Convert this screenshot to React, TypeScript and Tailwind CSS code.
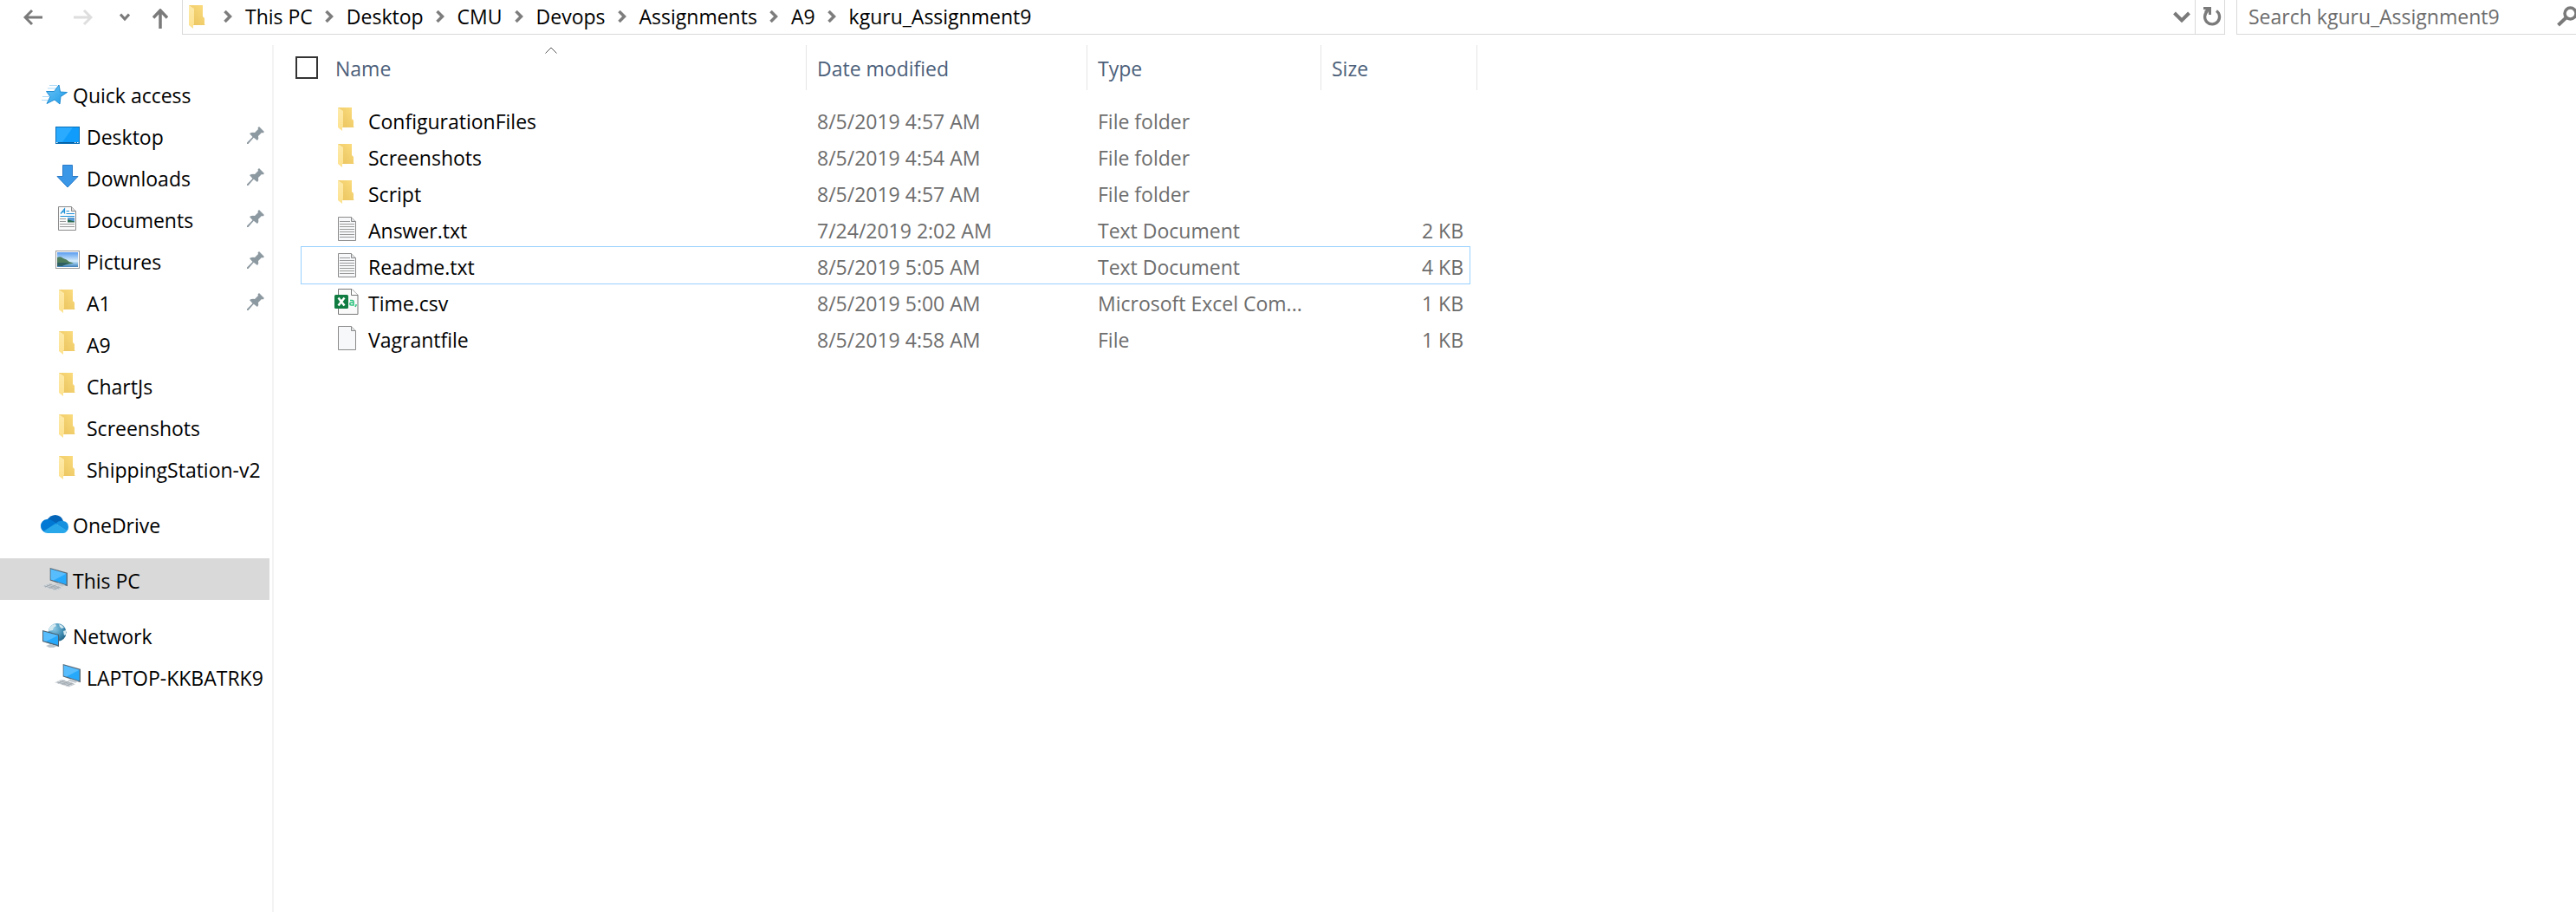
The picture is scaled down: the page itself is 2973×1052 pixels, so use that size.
import React from "react";

function FolderIcon() {
  return (
    <svg width="20" height="28" viewBox="0 0 20 28" className="shrink-0" aria-hidden="true">
      <defs>
        <linearGradient id="folderBack" x1="0" x2="1" y1="1" y2="0">
          <stop offset="0" stopColor="#e9c25c" />
          <stop offset="1" stopColor="#fbdc7e" />
        </linearGradient>
        <linearGradient id="folderFront" x1="0" x2="0" y1="0" y2="1">
          <stop offset="0" stopColor="#fdeaab" />
          <stop offset="1" stopColor="#fde18d" />
        </linearGradient>
      </defs>
      <path d="M0 0H16V13L18 15V23H0Z" fill="url(#folderBack)" />
      <path d="M0 0L6 4V22L5 23V27L0 23Z" fill="url(#folderFront)" />
      <path d="M18 22L19 23H18Z" fill="#f3d98f" />
    </svg>
  );
}

function PageIcon({ lines }: { lines?: boolean }) {
  return (
    <svg width="22" height="28" viewBox="0 0 22 28" className="shrink-0" aria-hidden="true">
      <path d="M.5 .5H15.5L20.5 5.5V27.500H.5Z" fill="#f6f8f9" stroke="#8b8b8b" />
      <path d="M15.500 .5V5.500H20.500" fill="#dfe1e3" stroke="#8b8b8b" />
      {lines && (
        <path d="M2 5.500H14M2 8.500H19M2 11.500H19M2 14.500H19M2 17.500H19M2 20.500H19M2 23.500H19" stroke="#9a9a9a" />
      )}
    </svg>
  );
}

function CsvIcon() {
  return (
    <svg width="28" height="30" viewBox="0 0 28 30" className="shrink-0" aria-hidden="true">
      <path d="M4.500 .5H20L27 7.500V29.500H4.500Z" fill="#fafafa" stroke="#777" />
      <path d="M19.500 .5V7.500H27" fill="#fff" stroke="#777" />
      <rect x="0" y="7" width="16" height="16" rx="1.500" fill="#107c41" />
      <path d="M4.500 10.500L11.500 19.500M11.500 10.500L4.500 19.500" stroke="#fff" strokeWidth="2.600" />
      <path d="M18 13.500H20.500Q22 13.500 22 15V19H19.500Q17.800 19 17.800 17.500T19.500 16H22M25 18V19L24 21" fill="none" stroke="#33c481" strokeWidth="1.600" />
    </svg>
  );
}

function StarIcon() {
  return (
    <svg width="30" height="24" viewBox="0 0 30 24" className="shrink-0" aria-hidden="true">
      <defs>
        <linearGradient id="star" x1="0" x2="1" y1="0" y2="1">
          <stop offset="0" stopColor="#6cc4f5" />
          <stop offset="1" stopColor="#1c9be8" />
        </linearGradient>
      </defs>
      <path d="M9 1.500H18M7 5H17M1 14.500H9M0 18.500H7" stroke="#a9d9f7" />
      <path d="M20 1L21.500 9L29.500 9.500L22 14.500L21 23L15 18L6 22.500L10 14.500L5.500 8.500L14.500 8.500Z" fill="url(#star)" stroke="#1585cf" strokeWidth=".9" />
    </svg>
  );
}

function DesktopIcon() {
  return (
    <svg width="28" height="20" viewBox="0 0 28 20" className="shrink-0" aria-hidden="true">
      <rect x=".5" y=".5" width="27" height="19" fill="#0f9cfb" stroke="#0a6fb8" />
      <path d="M1 1H20L8 18H1Z" fill="#2aabff" />
      <path d="M1 18.500H27" stroke="#075c9c" />
      <path d="M1 18.500H2.500M22 18.500H23.500M25 18.500H26.500" stroke="#fff" />
    </svg>
  );
}

function DownloadIcon() {
  return (
    <svg width="26" height="27" viewBox="0 0 26 27" className="shrink-0" aria-hidden="true">
      <path d="M7.500 .5H18.500V13.500H25L13 26L1 13.500H7.500Z" fill="#3a97e8" stroke="#2b7bc8" />
    </svg>
  );
}

function DocumentIcon() {
  return (
    <svg width="22" height="28" viewBox="0 0 22 28" className="shrink-0" aria-hidden="true">
      <path d="M.5 .5H15.500L20.500 5.500V27.500H.5Z" fill="#fbfbfb" stroke="#8b8b8b" />
      <path d="M15.500 .5V5.500H20.500" fill="#e3e3e3" stroke="#8b8b8b" />
      <path d="M3 8.500L7.500 3V8.500M5 6.500H7.500M9.500 5.500H13M9.500 8.500H19M2.500 11.500H19" fill="none" stroke="#1e90d8" strokeWidth="1.200" />
      <path d="M2 14.500H9M2 17.500H9M2 20.500H19M2 23.500H19" stroke="#9a9a9a" />
      <rect x="11" y="13" width="8" height="5" fill="#5b9bd5" />
      <path d="M11 15L14 16L19 17.500V18.500H11Z" fill="#2d6b52" />
    </svg>
  );
}

function PictureIcon() {
  return (
    <svg width="28" height="21" viewBox="0 0 28 21" className="shrink-0" aria-hidden="true">
      <defs>
        <linearGradient id="sky" x1="0" x2="0" y1="0" y2="1">
          <stop offset="0" stopColor="#5a9df0" />
          <stop offset=".6" stopColor="#d6ecfa" />
          <stop offset=".75" stopColor="#8fc1e6" />
          <stop offset="1" stopColor="#3f7fb8" />
        </linearGradient>
      </defs>
      <rect x=".5" y=".5" width="27" height="20" fill="#fff" stroke="#9a9a9a" />
      <rect x="2" y="2" width="24" height="17" fill="url(#sky)" />
      <path d="M2 8Q6 6 9 9Q13 10 16 13L21 14.500L12 16.500H2Z" fill="#4d7d5c" />
      <path d="M2 14H16L8 18H2Z" fill="#2e5f63" />
    </svg>
  );
}

function OneDriveIcon() {
  return (
    <svg width="32" height="21" viewBox="0 0 32 21" className="shrink-0" aria-hidden="true">
      <path d="M7 6Q11 0 17 0Q24 0.500 26 7L18 11Z" fill="#0364b8" />
      <path d="M7 5Q11 4.500 14 7L19 10L5 20Q0 18 0 12.500Q.5 6 7 5Z" fill="#0078d4" />
      <path d="M17 10Q21 6 26 7Q32 8 32 14Q32 17 30 18.500Z" fill="#1490df" />
      <path d="M3 19L17 10L30.500 18Q29 21 26 21H8Q5 21 3 19Z" fill="#28a8ea" />
    </svg>
  );
}

function ComputerIcon() {
  return (
    <svg width="30" height="27" viewBox="0 0 31 28" className="shrink-0" aria-hidden="true">
      <path d="M10 0L31 6V22L10 15Z" fill="#5a6b78" />
      <path d="M11 1.500L29.500 7V20L11 14Z" fill="#27a9fb" />
      <path d="M11 1.500L29.500 7L14 15L11 14Z" fill="#58bdfd" />
      <path d="M15 20L20 18L28 20.500L25 22.500Z" fill="#c3cacf" />
      <path d="M0 22L8 18.500L25 24L17 27.500Z" fill="#d3d8dc" />
      <path d="M3 21.500L18 26M6 20.500L21 25M9 19.500L23 24M4 23L12 19.500M9 24.500L17 21M14 26L21 22.500" stroke="#98a3ab" strokeWidth=".8" />
    </svg>
  );
}

function NetworkIcon() {
  return (
    <svg width="28" height="28" viewBox="0 0 28 28" className="shrink-0" aria-hidden="true">
      <defs>
        <radialGradient id="globe" cx=".35" cy=".3" r=".8">
          <stop offset="0" stopColor="#8cc8e4" />
          <stop offset=".6" stopColor="#3f8cb2" />
          <stop offset="1" stopColor="#1c5c80" />
        </radialGradient>
      </defs>
      <circle cx="17" cy="10.500" r="10.500" fill="url(#globe)" />
      <path d="M8 5Q11 1 15 1L16 3L13 5L12 8L7 9ZM19 1Q23 2 25 5L22 6L20 4ZM24 9L27 8L27 13L25 14Z" fill="#d5e9f0" />
      <path d="M0 8L19 13V27L0 21Z" fill="#4d6373" />
      <path d="M1 9.500L18 14V25L1 20Z" fill="#27a9fb" />
      <path d="M1 9.500L18 14L4 21L1 20Z" fill="#58bdfd" />
      <path d="M4 26L9 24L17 26L13 28H8Z" fill="#bcc5cb" />
    </svg>
  );
}

function PinIcon() {
  return (
    <svg width="20" height="20" viewBox="0 0 20 20" className="shrink-0" aria-hidden="true">
      <path d="M14 0L20 6L18.500 7.500L17 7L13 11Q14 14 12 16L7.800 12.800L1.500 20H0V18.500L6.500 12L3 8Q6 6 9 7L13 3L12.500 1.500Z" fill="#8d99a1" />
    </svg>
  );
}

function Crumb() {
  return (
    <svg width="10" height="14" viewBox="0 0 10 14" className="shrink-0" aria-hidden="true">
      <path d="M1.500 1L7.500 7L1.500 13" fill="none" stroke="#7d7d7d" strokeWidth="3.500" />
    </svg>
  );
}

type Place = { label: string; icon: React.ReactNode; pinned?: boolean };

const quickAccess: Place[] = [
  { label: "Desktop", icon: <DesktopIcon />, pinned: true },
  { label: "Downloads", icon: <DownloadIcon />, pinned: true },
  { label: "Documents", icon: <DocumentIcon />, pinned: true },
  { label: "Pictures", icon: <PictureIcon />, pinned: true },
  { label: "A1", icon: <FolderIcon />, pinned: true },
  { label: "A9", icon: <FolderIcon /> },
  { label: "ChartJs", icon: <FolderIcon /> },
  { label: "Screenshots", icon: <FolderIcon /> },
  { label: "ShippingStation-v2", icon: <FolderIcon /> },
];

const crumbs = ["This PC", "Desktop", "CMU", "Devops", "Assignments", "A9", "kguru_Assignment9"];

const files = [
  { name: "ConfigurationFiles", date: "8/5/2019 4:57 AM", type: "File folder", size: "", icon: <FolderIcon /> },
  { name: "Screenshots", date: "8/5/2019 4:54 AM", type: "File folder", size: "", icon: <FolderIcon /> },
  { name: "Script", date: "8/5/2019 4:57 AM", type: "File folder", size: "", icon: <FolderIcon /> },
  { name: "Answer.txt", date: "7/24/2019 2:02 AM", type: "Text Document", size: "2 KB", icon: <PageIcon lines /> },
  { name: "Readme.txt", date: "8/5/2019 5:05 AM", type: "Text Document", size: "4 KB", icon: <PageIcon lines />, focused: true },
  { name: "Time.csv", date: "8/5/2019 5:00 AM", type: "Microsoft Excel Com...", size: "1 KB", icon: <CsvIcon />, wide: true },
  { name: "Vagrantfile", date: "8/5/2019 4:58 AM", type: "File", size: "1 KB", icon: <PageIcon /> },
];

function TopPlace({ label, icon, selected }: Place & { selected?: boolean }) {
  return (
    <a href="#" className={selected ? "flex h-12 items-center bg-[#d9d9d9] pl-[47px] pt-[3px]" : "flex h-12 items-center pl-[47px] pt-[3px]"}>
      <span className="mr-[5px] flex w-8 items-center justify-center pb-0.5">{icon}</span>
      {label}
    </a>
  );
}

function ChildPlace({ label, icon, pinned }: Place) {
  return (
    <a href="#" className="flex h-12 items-center pl-16 pr-1.5 pt-[3px]">
      <span className="mr-2 flex w-7 items-center justify-center pb-1">{icon}</span>
      <span className="flex-1 whitespace-nowrap">{label}</span>
      {pinned && <span className="pb-1"><PinIcon /></span>}
    </a>
  );
}

export default function App() {
  return (
    <div className="flex min-h-screen flex-col overflow-hidden bg-white font-['Open_Sans','Noto_Sans',sans-serif] text-[23px] leading-8 text-black">
      <header className="flex h-10 items-stretch">
        <nav aria-label="History" className="flex w-[210px] shrink-0 items-center pl-[27px]">
          <button aria-label="Back" className="mr-9">
            <svg width="22" height="20" viewBox="0 0 22 20"><path d="M22 10H2M10 2L2 10L10 18" fill="none" stroke="#7a7a7a" strokeWidth="3" /></svg>
          </button>
          <button aria-label="Forward" className="mr-[31px]">
            <svg width="22" height="20" viewBox="0 0 22 20"><path d="M0 10H20M12 2L20 10L12 18" fill="none" stroke="#dedede" strokeWidth="3" /></svg>
          </button>
          <button aria-label="Recent locations" className="mr-[26px]">
            <svg width="12" height="10" viewBox="0 0 12 10"><path d="M1 1.500L6 7L11 1.500" fill="none" stroke="#7a7a7a" strokeWidth="3" /></svg>
          </button>
          <button aria-label="Up" className="pt-0.5">
            <svg width="18" height="23" viewBox="0 0 18 23"><path d="M9 23V2M1 10.500L9 2L17 10.500" fill="none" stroke="#7a7a7a" strokeWidth="3.500" /></svg>
          </button>
        </nav>
        <div className="mr-[13px] flex min-w-0 flex-1 items-center border-b border-l border-r border-[#d9d9d9] pl-[7px]">
          <FolderIcon />
          <ol className="ml-5 flex flex-1 items-center gap-3.5 pb-0.5">
            {crumbs.map((c) => (
              <li key={c} className="flex items-center gap-[15px]">
                <Crumb />
                <a href="#">{c}</a>
              </li>
            ))}
          </ol>
          <button aria-label="Previous locations" className="mr-[5px]">
            <svg width="20" height="14" viewBox="0 0 20 14"><path d="M1.500 2L10 10.500L18.500 2" fill="none" stroke="#7a7a7a" strokeWidth="4" /></svg>
          </button>
          <button aria-label="Refresh" className="flex w-[34px] items-center justify-center self-stretch border-l border-[#d9d9d9] pb-0.5 pl-1">
            <svg width="22" height="22" viewBox="0 0 22 22">
              <path d="M5.500 5A8.500 8.500 0 1 0 16 4.500" fill="none" stroke="#7a7a7a" strokeWidth="3.300" />
              <path d="M1 0H10V9H7V5.500L4 7L2 5L4 3H1Z" fill="#7a7a7a" />
            </svg>
          </button>
        </div>
        <label className="flex w-[392px] shrink-0 items-center overflow-hidden border-b border-l border-[#d9d9d9] pb-0.5 pl-[13px]">
          <input type="text" aria-label="Search kguru_Assignment9" placeholder="Search kguru_Assignment9" className="w-[356px] shrink-0 outline-none placeholder:text-[#6d6d6d]" />
          <svg width="24" height="24" viewBox="0 0 24 24" className="shrink-0" aria-hidden="true">
            <circle cx="15.500" cy="8.500" r="6.500" fill="none" stroke="#7a7a7a" strokeWidth="3.500" />
            <path d="M11 13L1.500 22" stroke="#7a7a7a" strokeWidth="4" />
          </svg>
        </label>
      </header>

      <div className="mt-3 flex flex-1">
        <aside className="w-[316px] shrink-0 border-r-2 border-[#f3f3f3] pt-8">
          <nav aria-label="Places" className="mr-[3px] flex flex-col gap-4">
            <div>
              <TopPlace label="Quick access" icon={<StarIcon />} />
              {quickAccess.map((p) => (
                <ChildPlace key={p.label} {...p} />
              ))}
            </div>
            <TopPlace label="OneDrive" icon={<OneDriveIcon />} />
            <TopPlace label="This PC" icon={<ComputerIcon />} selected />
            <div>
              <TopPlace label="Network" icon={<NetworkIcon />} />
              <ChildPlace label="LAPTOP-KKBATRK9" icon={<ComputerIcon />} />
            </div>
          </nav>
        </aside>

        <main className="min-w-0 flex-1 pl-[25px]">
          <table className="w-[1364px] table-fixed border-separate border-spacing-0 text-left">
            <colgroup>
              <col className="w-[590px]" />
              <col className="w-[324px]" />
              <col className="w-[270px]" />
              <col className="w-[180px]" />
            </colgroup>
            <thead className="text-[#4c607a]">
              <tr className="h-[52px]">
                <th className="relative border-r border-[#e5e5e5] p-0 font-normal">
                  <div className="flex items-center">
                    <input type="checkbox" aria-label="Select all" className="mr-5 size-[26px] appearance-none border-2 border-[#333] bg-white checked:bg-[#333]" />
                    <span className="pt-0.5">Name</span>
                  </div>
                  <svg width="14" height="8" viewBox="0 0 14 8" className="absolute left-72 top-0.5" aria-label="Sorted ascending">
                    <path d="M.5 7.500L7 1L13.500 7.500" fill="none" stroke="#555" />
                  </svg>
                </th>
                {["Date modified", "Type", "Size"].map((h) => (
                  <th key={h} className="border-r border-[#e5e5e5] pb-0 pl-3 pr-0 pt-0.5 font-normal">{h}</th>
                ))}
              </tr>
            </thead>
            <tbody className="text-[#6d6d6d] before:block before:h-[13px]">
              {files.map((f) => (
                <tr key={f.name} className="relative h-[42px]">
                  <td className="px-0 pb-0 pt-[3px] text-black">
                    {f.focused && <span className="pointer-events-none absolute -inset-y-px left-1.5 right-2 border border-[#99d1ff]" />}
                    <div className={f.wide ? "flex items-center pl-[45px]" : "flex items-center pl-[49px]"}>
                      <span className={f.wide ? "flex w-[39px] pb-1" : "flex w-[35px] pb-1"}>{f.icon}</span>
                      {f.name}
                    </div>
                  </td>
                  <td className="pb-0 pl-3 pr-0 pt-[3px]">{f.date}</td>
                  <td className="whitespace-nowrap pb-0 pl-3 pr-0 pt-[3px]">{f.type}</td>
                  <td className="pb-0 pl-3 pr-4 pt-[3px] text-right">{f.size}</td>
                </tr>
              ))}
            </tbody>
          </table>
        </main>
      </div>
    </div>
  );
}
